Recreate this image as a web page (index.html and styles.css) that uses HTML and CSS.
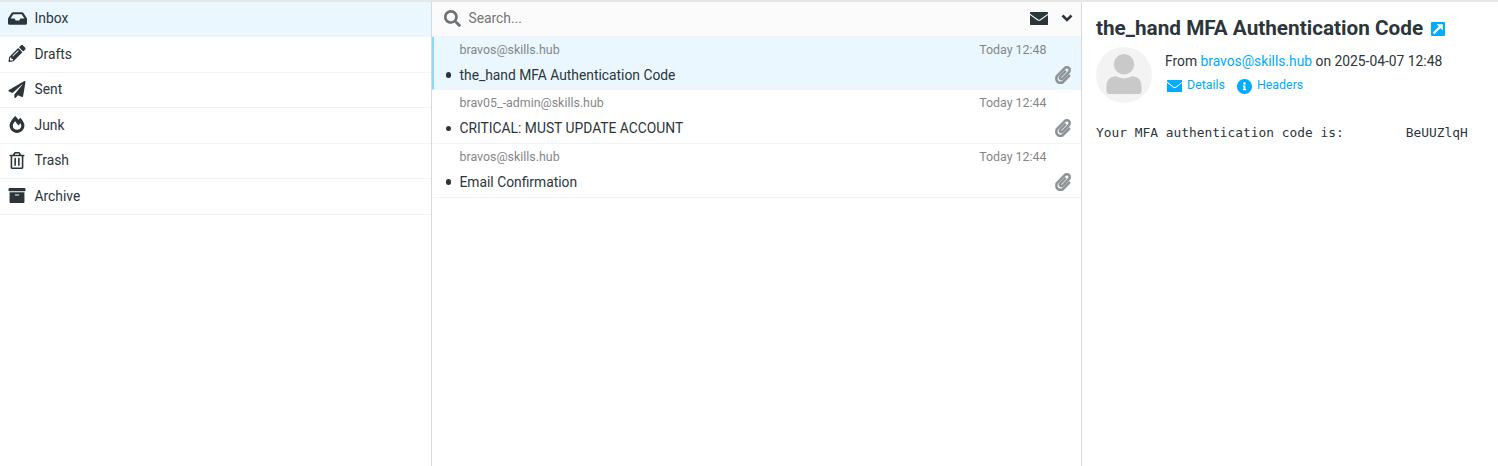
FILE: index.html
```html
<!DOCTYPE html>
<html lang="en">
<head>
<meta charset="utf-8">
<title>Inbox</title>
<link rel="stylesheet" href="styles.css">
</head>
<body>
<svg class="defs" width="0" height="0">
  <symbol id="clip" viewBox="0 0 448 512"><path d="M43.246 466.142c-58.43-60.289-57.341-157.511 1.386-217.581L254.392 34c44.316-45.332 116.351-45.336 160.671 0 43.89 44.894 43.943 117.329 0 162.276L232.214 383.128c-29.855 30.537-78.633 30.111-107.982-.998-28.275-29.97-27.368-77.473 1.452-106.953l143.743-146.835c6.182-6.314 16.312-6.422 22.626-.241l22.861 22.379c6.315 6.182 6.422 16.312.241 22.626L171.427 319.927c-4.932 5.045-5.236 13.428-.648 18.292 4.372 4.634 11.245 4.711 15.688.165l182.849-186.851c19.613-20.062 19.613-52.725-.011-72.798-19.189-19.627-49.957-19.637-69.154 0L90.39 293.295c-34.763 35.56-35.299 93.12-1.191 128.313 34.01 35.093 88.985 35.137 123.058.286l172.06-175.999c6.177-6.319 16.307-6.433 22.626-.256l22.877 22.364c6.319 6.177 6.434 16.307.256 22.626l-172.06 175.998c-59.576 60.938-155.943 60.216-214.77-.485z"/></symbol>
  <symbol id="envelope" viewBox="0 64 512 384" preserveAspectRatio="none"><path d="M512 150V436Q512 448 500 448H12Q0 448 0 436V150L215 312Q256 338 297 312ZM0 112V76Q0 64 12 64H500Q512 64 512 76V112L280 284Q256 298 232 284Z"/></symbol>
</svg>
<div class="app">
  <nav class="folders">
    <a class="folder selected"><svg class="wide" viewBox="0 0 576 512"><path d="M567.938 243.908L462.25 85.374A48.003 48.003 0 0 0 422.311 64H153.689a48 48 0 0 0-39.938 21.374L8.062 243.908A47.994 47.994 0 0 0 0 270.533V400c0 26.51 21.49 48 48 48h480c26.51 0 48-21.49 48-48V270.533a47.994 47.994 0 0 0-8.062-26.625zM162.252 128h251.497l85.333 128H376l-32 64H232l-32-64H76.918l85.334-128z"/></svg><span>Inbox</span></a>
    <a class="folder"><svg viewBox="0 0 512 512"><path d="M497.9 142.1l-46.1 46.1c-4.7 4.7-12.3 4.7-17 0l-111-111c-4.7-4.7-4.7-12.3 0-17l46.1-46.1c18.7-18.7 49.1-18.7 67.9 0l60.1 60.1c18.8 18.7 18.8 49.1 0 67.9zM284.2 99.8L21.6 362.4.4 483.9c-2.9 16.4 11.4 30.6 27.8 27.8l121.5-21.3 262.6-262.6c4.7-4.7 4.7-12.3 0-17l-111-111c-4.8-4.7-12.4-4.7-17.1 0zM124.1 339.9c-5.5-5.5-5.5-14.3 0-19.8l154-154c5.5-5.5 14.3-5.5 19.8 0s5.5 14.3 0 19.8l-154 154c-5.5 5.5-14.3 5.5-19.8 0zM88 424h48v36.3l-64.5 11.3-31.1-31.1L51.7 376H88v48z"/></svg><span>Drafts</span></a>
    <a class="folder"><svg viewBox="0 0 512 512"><path d="M476 3.2L12.5 270.6c-18.1 10.4-15.8 35.6 2.2 43.2L121 358.4l287.3-253.2c5.5-4.9 13.3 2.6 8.6 8.3L176 407v80.5c0 23.6 28.5 32.9 42.5 15.8L282 426l124.6 52.2c14.2 6 30.4-2.9 33-18.2l72-432C515 7.8 493.3-6.8 476 3.2z"/></svg><span>Sent</span></a>
    <a class="folder"><svg viewBox="0 0 448 512"><path d="M323.56 51.2c-20.8 19.3-39.58 39.59-56.22 59.97C240.08 73.62 206.28 35.53 168 0 69.74 91.17 0 209.96 0 281.6 0 408.85 100.29 512 224 512s224-103.15 224-230.4c0-53.27-51.98-163.14-124.44-230.4zm-19.47 340.65C282.43 407.01 255.72 416 226.86 416 154.71 416 96 368.26 96 290.75c0-38.61 24.31-72.63 72.79-130.75 6.93 7.98 98.83 125.34 98.83 125.34l58.63-66.88c4.14 6.85 7.91 13.55 11.27 19.97 27.35 52.19 15.81 118.97-33.43 153.42z"/></svg><span>Junk</span></a>
    <a class="folder"><svg viewBox="0 0 448 512"><path d="M268 416h24a12 12 0 0 0 12-12V188a12 12 0 0 0-12-12h-24a12 12 0 0 0-12 12v216a12 12 0 0 0 12 12zM432 80h-82.41l-34-56.7A48 48 0 0 0 274.41 0H173.59a48 48 0 0 0-41.16 23.3L98.41 80H16A16 16 0 0 0 0 96v16a16 16 0 0 0 16 16h16v336a48 48 0 0 0 48 48h288a48 48 0 0 0 48-48V128h16a16 16 0 0 0 16-16V96a16 16 0 0 0-16-16zM171.84 50.91A6 6 0 0 1 177 48h94a6 6 0 0 1 5.15 2.91L293.61 80H154.39zM368 464H80V128h288zm-212-48h24a12 12 0 0 0 12-12V188a12 12 0 0 0-12-12h-24a12 12 0 0 0-12 12v216a12 12 0 0 0 12 12z"/></svg><span>Trash</span></a>
    <a class="folder"><svg viewBox="0 0 512 512"><path d="M32 448c0 17.7 14.3 32 32 32h384c17.7 0 32-14.3 32-32V160H32v288zm160-212c0-6.6 5.4-12 12-12h104c6.6 0 12 5.4 12 12v8c0 6.6-5.4 12-12 12H204c-6.6 0-12-5.4-12-12v-8zM480 32H32C14.3 32 0 46.3 0 64v48c0 8.8 7.2 16 16 16h480c8.8 0 16-7.2 16-16V64c0-17.7-14.3-32-32-32z"/></svg><span>Archive</span></a>
  </nav>
  <section class="list">
    <div class="searchbar">
      <svg class="glass" viewBox="0 0 512 512"><path d="M505 442.7L405.3 343c-4.5-4.5-10.6-7-17-7H372c27.6-35.3 44-79.7 44-128C416 93.1 322.9 0 208 0S0 93.1 0 208s93.1 208 208 208c48.3 0 92.7-16.4 128-44v16.3c0 6.4 2.5 12.5 7 17l99.7 99.7c9.4 9.4 24.6 9.4 33.9 0l28.3-28.3c9.4-9.4 9.4-24.6.1-34zM208 336c-70.7 0-128-57.2-128-128 0-70.7 57.2-128 128-128 70.7 0 128 57.2 128 128 0 70.7-57.2 128-128 128z"/></svg>
      <span class="placeholder">Search...</span>
      <svg class="unread"><use href="#envelope"/></svg>
      <svg class="chevron" viewBox="0 0 12 8"><path d="M1.5 1.5L6 6L10.5 1.5"/></svg>
    </div>
    <article class="message selected">
      <div class="meta"><span>bravos@skills.hub</span><time>Today 12:48</time></div>
      <div class="subject"><i class="dot"></i><span>the_hand MFA Authentication Code</span><svg class="clip"><use href="#clip"/></svg></div>
    </article>
    <article class="message">
      <div class="meta"><span>brav05_-admin@skills.hub</span><time>Today 12:44</time></div>
      <div class="subject"><i class="dot"></i><span>CRITICAL: MUST UPDATE ACCOUNT</span><svg class="clip"><use href="#clip"/></svg></div>
    </article>
    <article class="message">
      <div class="meta"><span>bravos@skills.hub</span><time>Today 12:44</time></div>
      <div class="subject"><i class="dot"></i><span>Email Confirmation</span><svg class="clip"><use href="#clip"/></svg></div>
    </article>
  </section>
  <main class="preview">
    <h1><span>the_hand MFA Authentication Code</span><svg class="open" viewBox="0 0 14 14"><rect width="14" height="14" rx="1"/><path class="shaft" d="M2.6 11.4L9.6 4.4"/><path class="head" d="M5.6 2.2H11.8V8.4Z"/></svg></h1>
    <header class="sender">
      <svg class="avatar" viewBox="0 0 56 56"><circle class="disc" cx="28" cy="28" r="28"/><circle cx="28" cy="17.2" r="10.2"/><path d="M10.5 44V39C10.5 33 14.5 29.3 20 29.3Q28 33.5 36 29.3C41.5 29.3 45.5 33 45.5 39V44Q45.5 47 42.5 47H13.5Q10.5 47 10.5 44Z"/></svg>
      <div>
        <p class="from">From <a>bravos@skills.hub</a> on 2025-04-07 12:48</p>
        <p class="links"><svg class="details"><use href="#envelope"/></svg><a>Details</a><svg class="info" viewBox="8 8 496 496"><path d="M256 8C119.043 8 8 119.083 8 256c0 136.997 111.043 248 248 248s248-111.003 248-248C504 119.083 392.957 8 256 8zm0 110c23.196 0 42 18.804 42 42s-18.804 42-42 42-42-18.804-42-42 18.804-42 42-42zm56 254c0 6.627-5.373 12-12 12h-88c-6.627 0-12-5.373-12-12v-24c0-6.627 5.373-12 12-12h12v-64h-12c-6.627 0-12-5.373-12-12v-24c0-6.627 5.373-12 12-12h64c6.627 0 12 5.373 12 12v100h12c6.627 0 12 5.373 12 12v24z"/></svg><a>Headers</a></p>
      </div>
    </header>
    <pre class="body">Your MFA authentication code is:	BeUUZlqH</pre>
  </main>
</div>
</body>
</html>
```

FILE: styles.css
```css
* { box-sizing: border-box; }
body {
  margin: 0;
  background: #fff;
  color: #2c363a;
  font: 13.83px/20px Roboto, sans-serif;
  overflow: hidden;
}
svg { display: block; flex: none; fill: currentColor; }
.defs { position: absolute; }
.app { display: flex; height: 466px; border-top: 2px solid #e6e8e8; }

.folders { width: 432px; border-right: 1px solid #d5dadc; }
.folder {
  display: flex;
  align-items: center;
  height: 35.55px;
  padding: 0 0 1px 8px;
  border-bottom: 1px solid #f1f3f4;
}
.folder.selected { background: #eaf7fe; height: 35px; padding-bottom: 2px; }
.folder svg { width: 18px; height: 17px; }
.folder .wide { width: 19px; }
.folder span { margin-left: 8.5px; }
.folder .wide + span { margin-left: 7.5px; }

.list { width: 650px; border-right: 1px solid #d5dadc; }
.searchbar {
  display: flex;
  align-items: center;
  height: 35px;
  padding: 0 8px 2px 11.5px;
  background: #fbfbfb;
  border-bottom: 1px solid #f1f3f4;
}
.glass { width: 17px; height: 17px; color: #6c7275; }
.placeholder { flex: 1; margin-left: 8px; color: #737677; }
.unread { width: 18px; height: 13px; }
.chevron { width: 12px; height: 8px; margin-left: 13px; fill: none; stroke: currentColor; stroke-width: 2.6; }
.message {
  height: 53.5px;
  padding: 3px 10px 0 11.5px;
  border-left: 2px solid transparent;
  border-bottom: 1px solid #f1f3f4;
}
.message.selected { height: 53px; background: #eaf7fe; border-left-color: #8bd9fb; }
.meta {
  display: flex;
  justify-content: space-between;
  padding: 0 24.5px 0 14px;
  font-size: 12.42px;
  color: #848789;
}
.subject { display: flex; align-items: center; height: 20px; margin-top: 5.4px; }
.message.selected .subject, .message:last-child .subject { margin-top: 5px; }
.message:last-child { height: 54px; }
.message:last-child .subject { margin-top: 5.4px; }
.subject span { flex: 1; margin-left: 8.5px; }
.dot { width: 5.5px; height: 5.5px; border-radius: 50%; background: #2c363a; }
.clip { width: 16px; height: 18px; color: #8d9294; stroke: #8d9294; stroke-width: 10; }

.preview { flex: 1; padding: 14px 0 0 14px; }
h1 { display: flex; align-items: center; height: 24px; margin: 0; font-size: 20.73px; font-weight: 700; }
.open { width: 14px; height: 14px; margin: 2px 0 0 8px; color: #00acff; }
.open .shaft { stroke: #fff; stroke-width: 2.2; }
.open .head { fill: #fff; }
.sender { display: flex; gap: 13px; margin-top: 7px; }
.avatar { width: 56px; height: 56px; fill: #c9c9c9; }
.avatar .disc { fill: #f3f3f3; }
.from, .links { margin: 0; }
.from { padding-top: 4px; }
.preview a { color: #00acff; }
.links { display: flex; align-items: center; height: 20px; margin-top: 4px; padding-left: 1.5px; font-size: 12.4px; color: #00acff; }
.details { width: 15.5px; height: 12px; margin: 2px 5px 0 0; }
.info { width: 15px; height: 15px; margin: 2px 5px 0 12px; }
.body { margin: 20px 0 0; font: 12.87px/20px "DejaVu Sans Mono", monospace; tab-size: 8; }
```
